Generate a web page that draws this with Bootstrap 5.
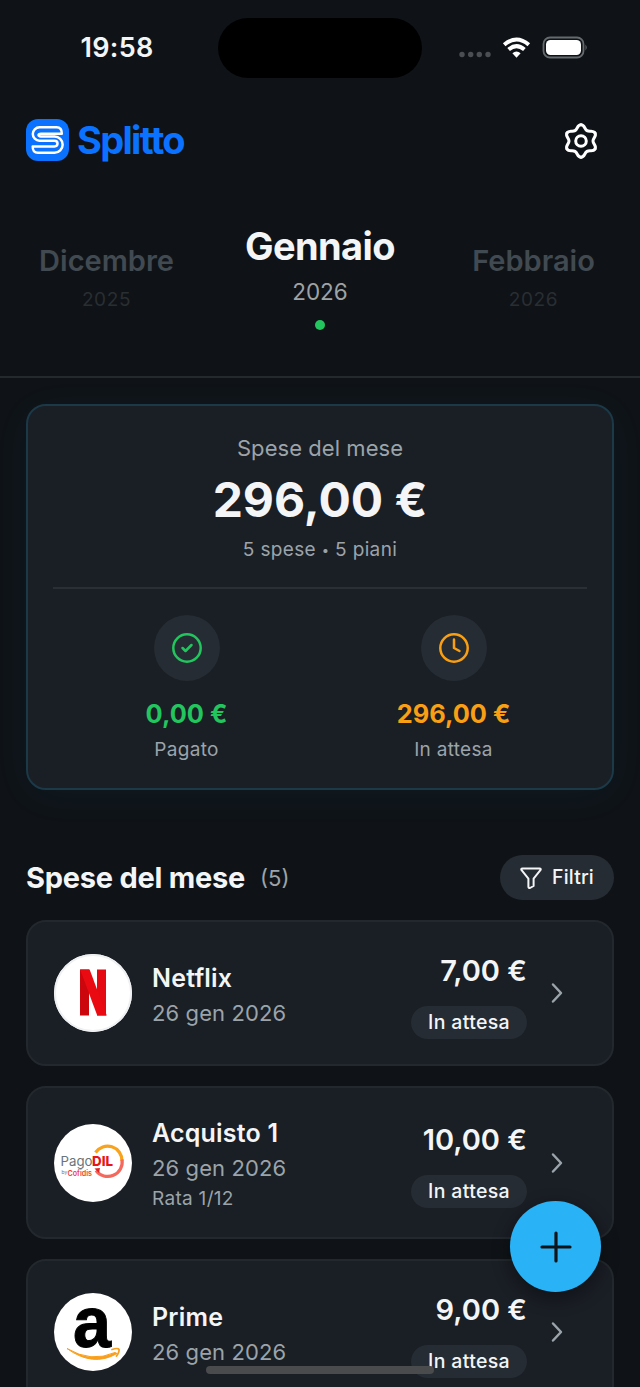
<!DOCTYPE html>
<html lang="it">
<head>
<meta charset="utf-8">
<meta name="viewport" content="width=device-width, initial-scale=1">
<title>Splitto</title>
<link href="https://cdn.jsdelivr.net/npm/bootstrap@5.3.0/dist/css/bootstrap.min.css" rel="stylesheet">
<style>
body{background:#0f1317;color:#f3f5f7;font-family:Inter,"Liberation Sans",sans-serif;}
.screen{width:640px;height:1387px;}
.t{white-space:nowrap;}
.muted{color:#9ba4aa;}
.statusbar{height:96px;}
.clock{width:232px;font-size:27px;font-weight:600;letter-spacing:.3px;padding:1px 0 0 2px;}
.island{width:204px;height:60px;border-radius:30px;background:#000;margin-left:-14px;}
.sys{width:204px;padding-left:36px;}
.topbar{height:88px;padding:0 39px 0 26px;}
.brand{font-size:38px;font-weight:700;color:#0b72ff;letter-spacing:-1.7px;line-height:42px;padding-bottom:1px;}
.months{height:194px;padding-top:39px;border-bottom:2px solid #23292d;}
.month{width:213px;}
.month-side{padding-top:20px;}
.m-on{font-size:38px;font-weight:700;letter-spacing:-.6px;line-height:46px;}
.m-off{font-size:29px;font-weight:600;color:#424a51;line-height:36px;}
.y-on{font-size:22.500px;line-height:28px;margin-top:9px;}
.y-off{font-size:19px;line-height:24px;color:#292e32;margin-top:9px;letter-spacing:.6px;}
.dot{width:10px;height:10px;background:#22c55e;margin-top:14px;}
.summary{height:386px;margin:26px 26px 0;border:2px solid #1b3947;border-radius:20px;background:#1a1e25;box-shadow:0 6px 40px 0 rgba(41,180,246,.045);padding:27px 25px 0;}
.lab{font-size:22px;line-height:30px;letter-spacing:.05px;}
.total{font-size:48px;font-weight:700;line-height:58px;margin-top:8px;}
.meta{font-size:19px;line-height:26px;margin-top:8px;letter-spacing:.35px;}
.bullet{font-size:13px;vertical-align:1px;}
.rule{height:2px;background:#292f35;margin-top:24px;}
.ring{width:66px;height:66px;background:#262c33;}
.stat{padding-top:26px;}
.val{font-size:25.400px;font-weight:700;line-height:32px;margin-top:17px;}
.cap{font-size:19px;line-height:26px;margin-top:7px;letter-spacing:.3px;}
.green{color:#22c55e;}.amber{color:#f99f14;}
.section{height:45px;margin:65px 26px 0;}
.sec-title{font-size:29px;font-weight:700;letter-spacing:-.25px;padding-top:1px;}
.sec-count{font-size:22px;padding-top:1px;margin-left:15px;}
.filter{width:114px;height:45px;background:#262c33;font-size:19.500px;font-weight:500;letter-spacing:.15px;}
.expense{height:146px;margin:20px 26px 0;border:2px solid #22282d;border-radius:20px;background:#1a1e25;padding:0 41px 0 26px;}
.expense.tall{height:153px;}
.logo{width:78px;height:78px;background:#fff;margin-right:20px;}
.logo svg{overflow:visible;display:block;}
.who{padding-top:2px;}
.tall .who{padding-top:3px;}
.name{font-size:25px;font-weight:600;line-height:32px;letter-spacing:.2px;}
.date{font-size:22px;line-height:28px;margin-top:5px;letter-spacing:.1px;}
.rate{font-size:19px;line-height:24px;margin-top:5px;letter-spacing:.3px;}
.amount{padding-top:6px;}
.tall .amount{padding-top:5px;}
.price{font-size:29px;font-weight:600;line-height:36px;}
.pill{width:116px;height:33px;background:#262c33;font-size:19.500px;font-weight:500;letter-spacing:.35px;margin-top:17px;padding-top:1px;}
.chev{margin-left:16px;}
.fab{left:510px;top:1201px;width:91px;height:91px;background:#29b3f6;box-shadow:0 6px 18px rgba(0,0,0,.4);}
.home{left:206px;top:1366px;width:228px;height:8px;background:#494b4d;}
</style>
</head>
<body>
<div class="screen position-relative overflow-hidden">
  <div class="statusbar d-flex align-items-center">
    <div class="clock text-center">19:58</div>
    <div class="island"></div>
    <div class="sys d-flex align-items-center">
      <svg width="130" height="24" viewBox="0 0 130 24">
        <g fill="#4b4f53"><circle cx="4" cy="18.500" r="2.700"/><circle cx="12.700" cy="18.500" r="2.700"/><circle cx="21.300" cy="18.500" r="2.700"/><circle cx="30" cy="18.500" r="2.700"/></g>
        <path d="M58.500 21.700L54.400 17.200Q58.500 13.700 62.600 17.200Z" fill="#fff"/>
        <g fill="none" stroke="#fff" stroke-width="4"><path d="M50.600 13.500Q58.500 6.800 66.400 13.500"/><path d="M46.200 8.700Q58.500-1.700 70.800 8.700"/></g>
        <rect x="85.500" y="1.500" width="40" height="20" rx="6.500" fill="none" stroke="#656a6e" stroke-width="1.800"/>
        <rect x="88" y="4" width="35" height="15" rx="4.500" fill="#fff"/>
        <path d="M127.500 8.500q2.400 3 0 6z" fill="#656a6e"/>
      </svg>
    </div>
  </div>

  <header class="topbar d-flex align-items-center">
    <svg width="43" height="42" viewBox="0 0 43 42">
      <rect width="43" height="42" rx="12" fill="#0b72ff"/>
      <path d="M13.500 8.300A6.700 6.700 0 0 0 13.500 21.700H28.500Q31.500 21.700 31.500 24.500T28.500 27.400H6.700Q6.500 33.800 12 33.800H28.500A8 8 0 0 0 28.500 17.500H15Q12.500 17.200 12.500 16T15 14.700H35.800Q36 8.300 30.500 8.300Z" fill="none" stroke="#fff" stroke-width="2.500" stroke-linejoin="round"/>
    </svg>
    <div class="brand t ms-2">Splitto</div>
    <svg class="ms-auto" width="40" height="40" viewBox="-20 -21 40 40" fill="none" stroke="#fff" stroke-width="3" stroke-linecap="round">
      <defs><path id="lobe" d="M0-16.200C3.800-16.200 3.230-11.990 6-10.390C8.770-8.790 12.130-11.390 14.030-8.100"/></defs>
      <use href="#lobe"/><use href="#lobe" transform="rotate(60)"/><use href="#lobe" transform="rotate(120)"/><use href="#lobe" transform="rotate(180)"/><use href="#lobe" transform="rotate(240)"/><use href="#lobe" transform="rotate(300)"/>
      <circle r="5.300"/>
    </svg>
  </header>

  <nav class="months d-flex justify-content-between text-center">
    <div class="month month-side"><div class="m-off t">Dicembre</div><div class="y-off">2025</div></div>
    <div class="month"><div class="m-on t">Gennaio</div><div class="y-on muted">2026</div><div class="dot rounded-circle mx-auto"></div></div>
    <div class="month month-side"><div class="m-off t">Febbraio</div><div class="y-off">2026</div></div>
  </nav>

  <section class="summary text-center">
    <div class="lab muted t">Spese del mese</div>
    <div class="total t">296,00 €</div>
    <div class="meta muted t">5 spese <span class="bullet">•</span> 5 piani</div>
    <div class="rule"></div>
    <div class="row g-0">
      <div class="col-6 stat">
        <div class="ring rounded-circle d-flex align-items-center justify-content-center mx-auto">
          <svg width="32" height="32" viewBox="-16 -16 32 32" fill="none" stroke="#22c55e" stroke-width="2.500" stroke-linecap="round" stroke-linejoin="round"><circle r="13.700"/><path d="M-4.500 0L-1.500 3L4.500-3"/></svg>
        </div>
        <div class="val green t">0,00 €</div><div class="cap muted">Pagato</div>
      </div>
      <div class="col-6 stat">
        <div class="ring rounded-circle d-flex align-items-center justify-content-center mx-auto">
          <svg width="32" height="32" viewBox="-16 -16 32 32" fill="none" stroke="#f99f14" stroke-width="2.500" stroke-linecap="round" stroke-linejoin="round"><circle r="13.700"/><path d="M0-8.500V0L5.500 3"/></svg>
        </div>
        <div class="val amber t">296,00 €</div><div class="cap muted">In attesa</div>
      </div>
    </div>
  </section>

  <div class="section d-flex align-items-center">
    <div class="sec-title t">Spese del mese</div>
    <div class="sec-count muted">(5)</div>
    <div class="filter rounded-pill d-flex align-items-center justify-content-center ms-auto">
      <svg class="me-2" width="24" height="24" viewBox="0 0 24 24" fill="none" stroke="#f3f5f7" stroke-width="2" stroke-linejoin="round"><path d="M2.500 2.500H19.500Q21.400 2.500 20.400 4.200L13.600 12.600V20L10 22Q8.400 22.200 8.400 20.500V12.600L1.600 4.200Q.6 2.500 2.500 2.500Z"/></svg>
      <span>Filtri</span>
    </div>
  </div>

  <div class="expense d-flex align-items-center">
    <div class="logo rounded-circle flex-shrink-0">
      <svg width="78" height="78" viewBox="0 0 78 78">
        <circle cx="39" cy="39" r="38" fill="none" stroke="#eef0f2" stroke-width="2"/>
        <rect x="26" y="15.500" width="9" height="46" fill="#cb060c"/><rect x="43" y="15.500" width="9" height="46" fill="#e50a12"/>
        <rect x="26" y="15.500" width="9.500" height="46" transform="translate(-5.630) skewX(20.400)" fill="#ea0b12"/>
      </svg>
    </div>
    <div class="who flex-grow-1"><div class="name">Netflix</div><div class="date muted">26 gen 2026</div></div>
    <div class="amount d-flex flex-column align-items-end"><div class="price t">7,00 €</div><div class="pill rounded-pill d-flex align-items-center justify-content-center">In attesa</div></div>
    <svg class="chev" width="28" height="28" viewBox="0 0 28 28" fill="none" stroke="#9ba4aa" stroke-width="2.500" stroke-linecap="round" stroke-linejoin="round"><path d="M10 5.500L18 14L10 22.500"/></svg>
  </div>

  <div class="expense tall d-flex align-items-center">
    <div class="logo rounded-circle flex-shrink-0">
      <svg width="78" height="78" viewBox="0 0 78 78">
        <path d="M41.500 28.500A14.500 14.500 0 0 1 68 37" fill="none" stroke="#f9a21b" stroke-width="3.200"/>
        <path d="M68 35.500A14.500 14.500 0 0 1 42 46.500" fill="none" stroke="#f4685d" stroke-width="3.200"/>
        <path d="M40.500 44.500L46 44L45 49Z" fill="#e42320"/>
        <text x="6.500" y="42" font-size="13.500" fill="#69747c" textLength="32" lengthAdjust="spacingAndGlyphs">Pago</text>
        <text x="38" y="42" font-size="13.500" font-weight="800" fill="#e81415" textLength="21" lengthAdjust="spacingAndGlyphs">DIL</text>
        <text x="7.500" y="49.500" font-size="5" fill="#69747c">by</text>
        <text x="13.500" y="52" font-size="7.500" font-weight="600" fill="#ef4436" textLength="24.500" lengthAdjust="spacingAndGlyphs">Cofidis</text>
      </svg>
    </div>
    <div class="who flex-grow-1"><div class="name">Acquisto 1</div><div class="date muted">26 gen 2026</div><div class="rate muted">Rata 1/12</div></div>
    <div class="amount d-flex flex-column align-items-end"><div class="price t">10,00 €</div><div class="pill rounded-pill d-flex align-items-center justify-content-center">In attesa</div></div>
    <svg class="chev" width="28" height="28" viewBox="0 0 28 28" fill="none" stroke="#9ba4aa" stroke-width="2.500" stroke-linecap="round" stroke-linejoin="round"><path d="M10 5.500L18 14L10 22.500"/></svg>
  </div>

  <div class="expense d-flex align-items-center">
    <div class="logo rounded-circle flex-shrink-0">
      <svg width="78" height="78" viewBox="0 0 78 78">
        <text x="19" y="54" font-family="Liberation Sans" font-size="73" font-weight="700" fill="#000" stroke="#000" textLength="38" lengthAdjust="spacingAndGlyphs">a</text>
        <path d="M13 55.500Q37 70 61 59.500L63 60.500Q39 74.500 13 55.500Z" fill="#f99f1c" stroke="#f99f1c"/>
        <path d="M58 56.500Q64 54.500 65 56.500Q65.500 59 62.500 63" fill="none" stroke="#f99f1c" stroke-width="1.800" stroke-linecap="round"/>
      </svg>
    </div>
    <div class="who flex-grow-1"><div class="name">Prime</div><div class="date muted">26 gen 2026</div></div>
    <div class="amount d-flex flex-column align-items-end"><div class="price t">9,00 €</div><div class="pill rounded-pill d-flex align-items-center justify-content-center">In attesa</div></div>
    <svg class="chev" width="28" height="28" viewBox="0 0 28 28" fill="none" stroke="#9ba4aa" stroke-width="2.500" stroke-linecap="round" stroke-linejoin="round"><path d="M10 5.500L18 14L10 22.500"/></svg>
  </div>

  <div class="fab position-absolute rounded-circle d-flex align-items-center justify-content-center">
    <svg width="32" height="32" viewBox="-16 -16 32 32" stroke="#101418" stroke-width="3.200" stroke-linecap="round"><path d="M-14 0H14M0-14V14"/></svg>
  </div>
  <div class="home position-absolute rounded-pill"></div>
</div>
<script src="https://cdn.jsdelivr.net/npm/bootstrap@5.3.0/dist/js/bootstrap.bundle.min.js"></script>
</body>
</html>
